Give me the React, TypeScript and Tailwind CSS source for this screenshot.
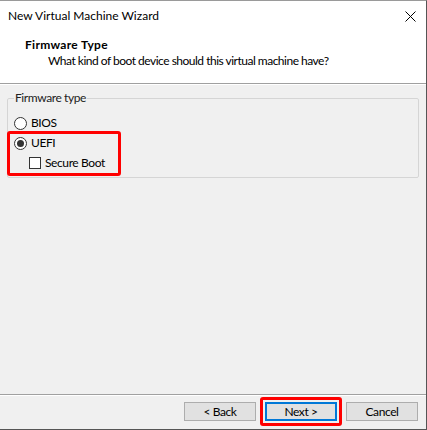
import React from "react";

function Radio({ checked }: { checked?: boolean }) {
  return (
    <span className="w-[13px] h-[13px] rounded-full border border-[#333333] bg-white flex items-center justify-center shrink-0">
      {checked && <span className="w-[7px] h-[7px] rounded-full bg-[#333333]" />}
    </span>
  );
}

export default function App() {
  return (
    <div className="w-[427px] h-[430px] flex flex-col bg-[#f0f0f0] border-t border-t-[#9a9a9a] border-r border-r-[#555555] border-b border-b-[#555555] font-['Lato',sans-serif] text-[12px] leading-[16px] tracking-[-0.4px] text-black">
      <div className="h-[30px] bg-white flex items-center justify-between pl-[8px] pr-[10px] shrink-0">
        <span className="tracking-normal">New Virtual Machine Wizard</span>
        <svg width="11" height="11" viewBox="0 0 11 11" className="text-black">
          <path d="M0.5 0.5 L10.5 10.5 M10.5 0.5 L0.5 10.5" stroke="currentColor" strokeWidth="1" />
        </svg>
      </div>
      <div className="h-[53px] bg-white border-b border-[#a0a0a0] pt-[6px] shrink-0">
        <div className="pl-[25px] font-bold tracking-[0.3px]">Firmware Type</div>
        <div className="pl-[48px] tracking-[-0.5px]">What kind of boot device should this virtual machine have?</div>
      </div>
      <div className="flex-1 border-t border-white">
        <fieldset className="mt-[5px] ml-[7px] w-[412px] border border-[#d5d5d5] rounded-[2px]">
          <legend className="ml-[6px] px-[1px] text-[#222222]">Firmware type</legend>
          <div className="mt-[7px] ml-[6px] h-[20px] flex items-center gap-[4px]">
            <Radio />
            <span>BIOS</span>
          </div>
          <div className="-mt-[2px] -ml-[1px] mb-[1px] w-[114px] border-[3px] border-[#ff0000] rounded-[3px]">
            <div className="h-[18px] pl-[4px] flex items-center gap-[4px]">
              <Radio checked />
              <span>UEFI</span>
            </div>
            <div className="h-[21px] pl-[19px] flex items-center gap-[4px]">
              <span className="w-[12px] h-[12px] border border-[#333333] bg-white shrink-0" />
              <span>Secure Boot</span>
            </div>
          </div>
        </fieldset>
      </div>
      <div className="h-[35px] shrink-0 border-t border-t-[#a0a0a0] flex flex-col">
        <div className="flex-1 border-t border-white flex justify-end items-start pt-[6px] pr-[8px] gap-[9px]">
          <button className="w-[72px] h-[19px] bg-[#e1e1e1] border border-[#adadad] flex items-center justify-center leading-none">&lt; Back</button>
          <div className="relative">
            <button className="w-[72px] h-[19px] bg-[#e1e1e1] border-2 border-[#0078d7] flex items-center justify-center leading-none">Next &gt;</button>
            <div className="absolute -inset-[5px] border-[3px] border-[#ff0000] rounded-[3px] pointer-events-none" />
          </div>
          <button className="w-[72px] h-[19px] bg-[#e1e1e1] border border-[#adadad] flex items-center justify-center leading-none">Cancel</button>
        </div>
      </div>
    </div>
  );
}
